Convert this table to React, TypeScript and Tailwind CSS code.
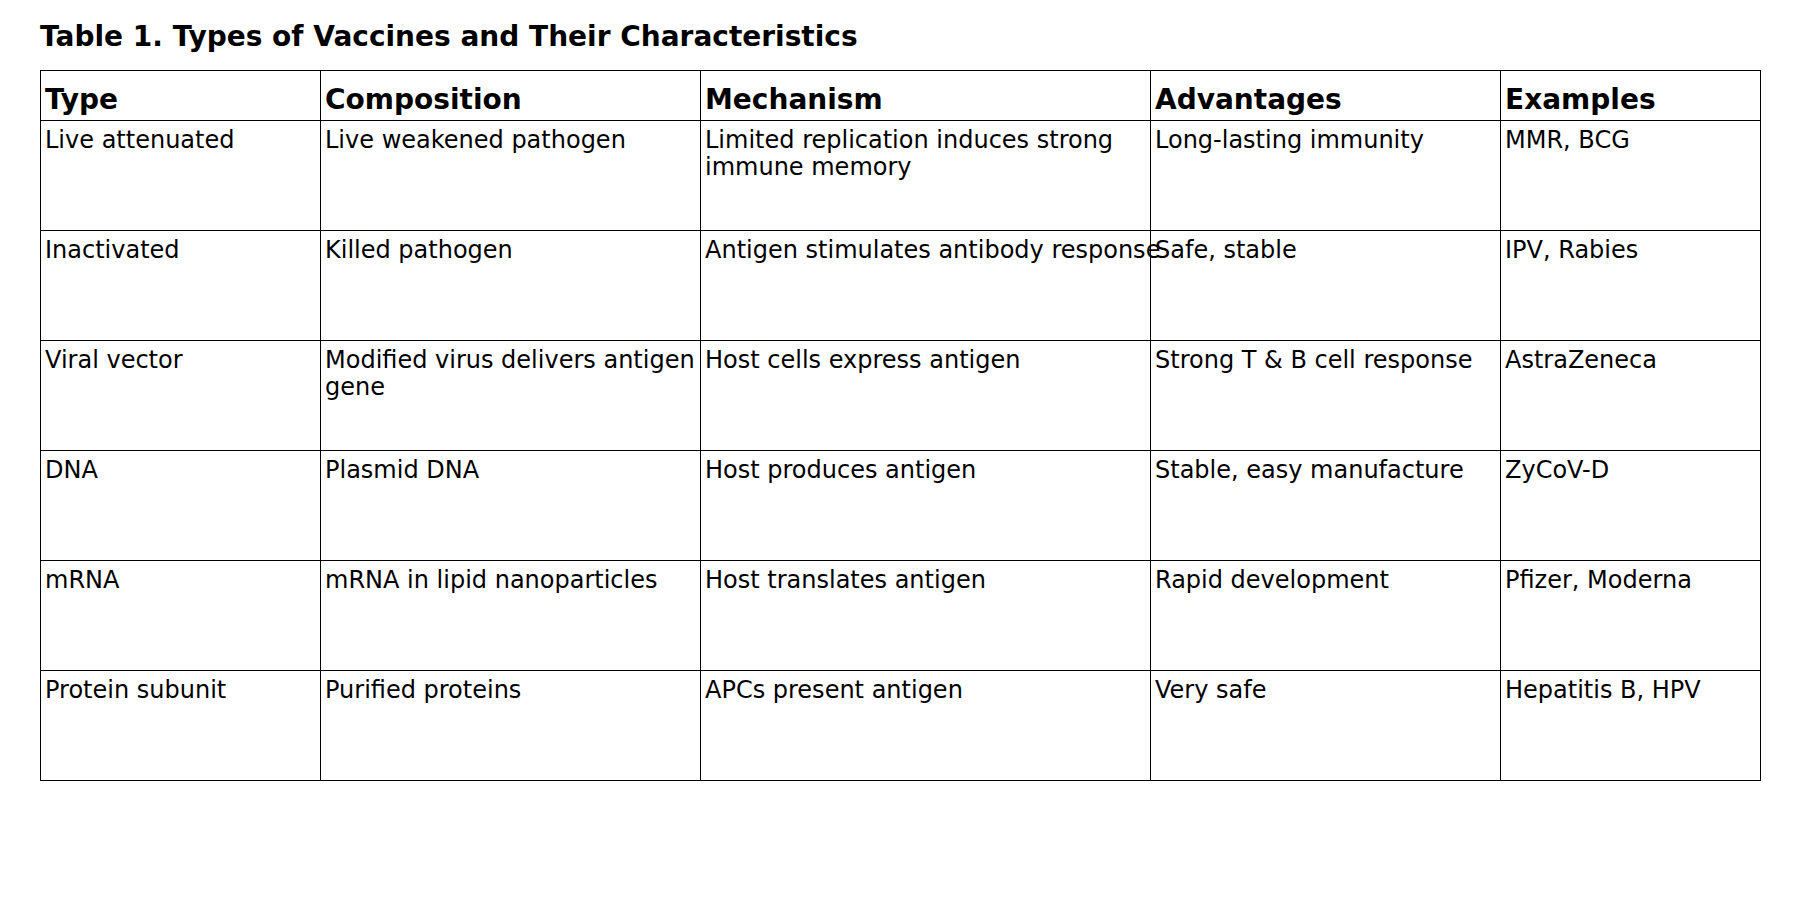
import type { FC } from "react";

type Row = {
  type: string;
  composition: string[];
  mechanism: string[];
  advantages: string;
  examples: string;
};

const rows: Row[] = [
  {
    type: "Live attenuated",
    composition: ["Live weakened pathogen"],
    mechanism: ["Limited replication induces strong", "immune memory"],
    advantages: "Long-lasting immunity",
    examples: "MMR, BCG",
  },
  {
    type: "Inactivated",
    composition: ["Killed pathogen"],
    mechanism: ["Antigen stimulates antibody response"],
    advantages: "Safe, stable",
    examples: "IPV, Rabies",
  },
  {
    type: "Viral vector",
    composition: ["Modified virus delivers antigen", "gene"],
    mechanism: ["Host cells express antigen"],
    advantages: "Strong T & B cell response",
    examples: "AstraZeneca",
  },
  {
    type: "DNA",
    composition: ["Plasmid DNA"],
    mechanism: ["Host produces antigen"],
    advantages: "Stable, easy manufacture",
    examples: "ZyCoV-D",
  },
  {
    type: "mRNA",
    composition: ["mRNA in lipid nanoparticles"],
    mechanism: ["Host translates antigen"],
    advantages: "Rapid development",
    examples: "Pfizer, Moderna",
  },
  {
    type: "Protein subunit",
    composition: ["Purified proteins"],
    mechanism: ["APCs present antigen"],
    advantages: "Very safe",
    examples: "Hepatitis B, HPV",
  },
];

const headers = ["Type", "Composition", "Mechanism", "Advantages", "Examples"];

const Lines: FC<{ lines: string[] }> = ({ lines }) => (
  <>
    {lines.map((l) => (
      <div key={l}>{l}</div>
    ))}
  </>
);

const App: FC = () => {
  return (
    <div className="min-h-screen bg-white px-[40px] pt-[20px] text-black font-['DejaVu_Sans',sans-serif]">
      <h1 className="mb-[17px] text-[28px] font-bold leading-[33px]">
        Table 1. Types of Vaccines and Their Characteristics
      </h1>

      <table className="table-fixed border-collapse w-[1720px]">
        <colgroup>
          <col className="w-[280px]" />
          <col className="w-[380px]" />
          <col className="w-[450px]" />
          <col className="w-[350px]" />
          <col className="w-[260px]" />
        </colgroup>
        <thead>
          <tr className="h-[50px]">
            {headers.map((h) => (
              <th
                key={h}
                className="border border-black px-[4px] pt-[12px] pb-0 text-left align-top text-[28px] font-bold leading-[33px]"
              >
                {h}
              </th>
            ))}
          </tr>
        </thead>
        <tbody className="text-[24px] leading-[27px]">
          {rows.map((r) => (
            <tr key={r.type} className="h-[110px]">
              <td className="border border-black px-[4px] pt-[6px] align-top whitespace-nowrap">{r.type}</td>
              <td className="border border-black px-[4px] pt-[6px] align-top whitespace-nowrap">
                <Lines lines={r.composition} />
              </td>
              <td className="border border-black px-[4px] pt-[6px] align-top whitespace-nowrap">
                <Lines lines={r.mechanism} />
              </td>
              <td className="border border-black px-[4px] pt-[6px] align-top whitespace-nowrap">{r.advantages}</td>
              <td className="border border-black px-[4px] pt-[6px] align-top whitespace-nowrap">{r.examples}</td>
            </tr>
          ))}
        </tbody>
      </table>
    </div>
  );
};

export default App;
